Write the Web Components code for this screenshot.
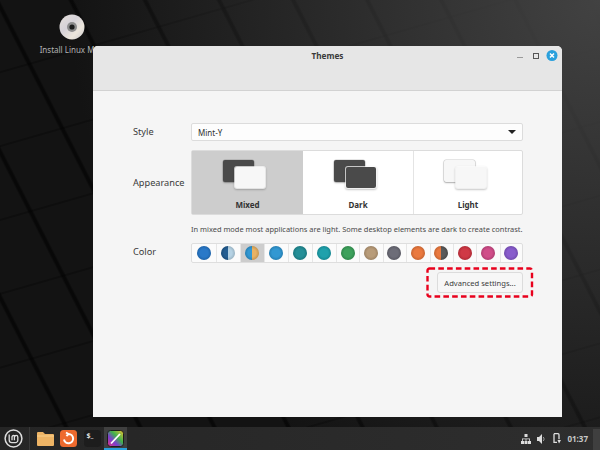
<!DOCTYPE html>
<html>
<head>
<meta charset="utf-8">
<title>Themes</title>
<style>
  html, body { margin: 0; height: 100%; }
  body { width: 600px; height: 450px; overflow: hidden; font-family: "Noto Sans", sans-serif; }
</style>
</head>
<body>
<mint-desktop>
  <desktop-icon label="Install Linux Mint"></desktop-icon>
  <themes-window title-text="Themes"></themes-window>
  <mint-panel slot="panel"></mint-panel>
</mint-desktop>

<script>
class MintDesktop extends HTMLElement {
  constructor() {
    super();
    this.attachShadow({ mode: "open" });
    this.shadowRoot.innerHTML = `
      <style>
        :host { display: flex; flex-direction: column; width: 600px; height: 450px; }
        .area {
          flex: 1; position: relative; overflow: hidden;
          background:
            radial-gradient(circle at 600px 0, rgba(66,66,66,1) 0, rgba(66,66,66,.85) 80px, rgba(66,66,66,0) 530px),
            repeating-linear-gradient(164deg, transparent 0 68px, rgba(0,0,0,.28) 69px 70px, transparent 71px),
            repeating-linear-gradient(63deg, #131313 0 56px, #080808 58px 60px, #131313 62px 66px);
        }
      </style>
      <div class="area"><slot></slot></div>
      <slot name="panel"></slot>
    `;
  }
}

class DesktopIcon extends HTMLElement {
  constructor() {
    super();
    this.attachShadow({ mode: "open" });
    this.shadowRoot.innerHTML = `
      <style>
        :host { position: absolute; left: 36px; top: 14px; width: 72px; display: flex; flex-direction: column; align-items: center; color: #b4b4b4; font-size: 8px; }
        svg { display: block; }
        span { margin-top: 4px; white-space: nowrap; }
      </style>
      <svg width="26" height="26" viewBox="0 0 26 26">
        <defs>
          <linearGradient id="cd" x1="0" y1="0" x2="1" y2="1">
            <stop offset="0" stop-color="#e6e0da"/><stop offset=".4" stop-color="#d6d2d8"/>
            <stop offset=".7" stop-color="#ece6dc"/><stop offset="1" stop-color="#c9c8cc"/>
          </linearGradient>
        </defs>
        <circle cx="13" cy="13" r="12.5" fill="url(#cd)"/>
        <circle cx="13" cy="13" r="5" fill="#8d8d8d"/>
        <circle cx="13" cy="13" r="2.6" fill="#1d1d1d"/>
      </svg>
      <span></span>
    `;
  }
  connectedCallback() {
    this.shadowRoot.querySelector("span").textContent = this.getAttribute("label");
  }
}

class ThemesWindow extends HTMLElement {
  constructor() {
    super();
    this.attachShadow({ mode: "open" });
    this.shadowRoot.innerHTML = `
      <style>
        :host {
          position: absolute; left: 93px; top: 46px; width: 469px; height: 371px;
          display: flex; flex-direction: column; background: #f5f5f5; color: #303030;
          border-radius: 5px 5px 0 0; overflow: hidden;
        }
        header {
          height: 45px; flex: none; box-sizing: border-box; background: #e6e6e6; border-bottom: 1px solid #d2d2d2;
          position: relative; display: flex; justify-content: center; padding-top: 4px;
          font-size: 8.2px; font-weight: 700; color: #3a3a3a;
        }
        .btns { position: absolute; right: 3px; top: 3px; display: flex; align-items: center; }
        .btns svg { display: block; }
        main { flex: 1; display: grid; grid-template-columns: 58px 332px; grid-auto-rows: min-content; padding: 32px 0 0 40px; font-size: 9.2px; align-items: center; }
        .lbl { color: #3a3a3a; margin-bottom: 2px; }
        .combo {
          height: 18px; box-sizing: border-box; border: 1px solid #dcdcdc; border-radius: 2px; background: #fdfdfd;
          display: flex; align-items: center; justify-content: space-between; padding: 0 6px 0 6px; font-size: 8px;
        }
        .modes { display: flex; height: 65px; margin-top: 9px; border: 1px solid #dcdcdc; border-radius: 2px; box-sizing: border-box; background: #fff; }
        .hint { grid-column: 2; font-size: 7.45px; color: #4a4a4a; margin-top: 8px; height: 12px; line-height: 12px; white-space: nowrap; }
        .app { margin-top: 10px; }
        .swatches {
          display: grid; grid-template-columns: 25px repeat(5, 24px) repeat(8, 23.375px); height: 20px; margin-top: 8px;
          outline: 1px solid #dedede; outline-offset: -1px; border-radius: 2px; background: #fbfbfb;
        }
        .swatches color-swatch + color-swatch { box-shadow: inset 1px 0 0 #e6e6e6; }
        .row { grid-column: 2; display: flex; justify-content: flex-end; margin-top: 9px; position: relative; }
        .sw-lbl { margin-top: 7px; }
      </style>
      <header>
        <span id="t"></span>
        <div class="btns">
          <svg width="6" height="12" viewBox="0 0 6 12" style="margin-right:9px"><rect x="0" y="7" width="6" height="1" fill="#9a9a9a"/></svg>
          <svg width="8" height="8" viewBox="0 0 8 8" style="margin-right:6px"><rect x="1.5" y="1.5" width="5" height="5" fill="none" stroke="#555" stroke-width="1"/></svg>
          <svg width="13" height="13" viewBox="0 0 13 13"><circle cx="6" cy="6.5" r="5.5" fill="#2aa0dc"/><path d="M4 4.5l4 4M8 4.5l-4 4" stroke="#fff" stroke-width="1.5"/></svg>
        </div>
      </header>
      <main>
        <span class="lbl">Style</span>
        <div class="combo">Mint-Y
          <svg width="8" height="4" viewBox="0 0 8 4"><path d="M0 0h8L4 4z" fill="#222"/></svg>
        </div>
        <span class="lbl app">Appearance</span>
        <div class="modes">
          <mode-card label="Mixed" back="#4a4a4a" front="#f7f7f7" selected style="width:111px"></mode-card>
          <mode-card label="Dark" back="#4a4a4a" front="#4a4a4a" style="width:110px"></mode-card>
          <mode-card label="Light" back="#f7f7f7" front="#f7f7f7" style="width:109px;border-left:1px solid #e4e4e4"></mode-card>
        </div>
        <span class="hint">In mixed mode most applications are light. Some desktop elements are dark to create contrast.</span>
        <span class="lbl sw-lbl">Color</span>
        <div class="swatches" id="sw"></div>
        <div class="row"><red-outline><push-button>Advanced settings...</push-button></red-outline></div>
      </main>
    `;
    const colors = [
      ["#1a6fc4"], ["#14528a", "#b0cfe2"], ["#2390cf", "#e6ac58", 1], ["#2390cf"], ["#14868f"],
      ["#0f9aa6"], ["#2f9a50"], ["#b3946f"], ["#62626e"], ["#e86f30"], ["#e86f30", "#4e4e4e"],
      ["#cc2a38"], ["#cc4080"], ["#7f50c8"]
    ];
    const sw = this.shadowRoot.getElementById("sw");
    colors.forEach(([a, b, on]) => {
      const el = document.createElement("color-swatch");
      el.setAttribute("a", a);
      if (b) el.setAttribute("b", b);
      if (on) el.setAttribute("selected", "");
      sw.appendChild(el);
    });
  }
  connectedCallback() {
    this.shadowRoot.getElementById("t").textContent = this.getAttribute("title-text");
  }
}

class ModeCard extends HTMLElement {
  constructor() {
    super();
    this.attachShadow({ mode: "open" });
  }
  connectedCallback() {
    const back = this.getAttribute("back");
    const front = this.getAttribute("front");
    this.shadowRoot.innerHTML = `
      <style>
        :host { display: flex; flex-direction: column; align-items: center; box-sizing: border-box; font-size: 8px; font-weight: 700; color: #333; }
        :host([selected]) { background: #cdcdcd; }
        .pic { position: relative; width: 43px; height: 29px; margin: 9px 6px 0 0; }
        .pic i { position: absolute; border-radius: 2px; }
        .b { left: 0; top: 0; width: 31px; height: 22px; background: ${back}; box-shadow: 0 0 0 .5px rgba(0,0,0,.18), 0 1px 2px rgba(0,0,0,.25); }
        .f { left: 12px; top: 7px; width: 30px; height: 21px; background: ${front}; box-shadow: 0 0 0 1px rgba(255,255,255,.7), 0 1px 2px 1px rgba(0,0,0,.22); }
        span { margin-top: 10px; }
      </style>
      <div class="pic"><i class="b"></i><i class="f"></i></div>
      <span>${this.getAttribute("label")}</span>
    `;
  }
}

class ColorSwatch extends HTMLElement {
  constructor() {
    super();
    this.attachShadow({ mode: "open" });
  }
  connectedCallback() {
    const a = this.getAttribute("a");
    const b = this.getAttribute("b") || a;
    this.shadowRoot.innerHTML = `
      <style>
        :host { display: flex; align-items: center; justify-content: center; }
        :host([selected]) { background: #cdcdcd; }
        div {
          width: 14px; height: 14px; border-radius: 50%;
          background:
            radial-gradient(circle, rgba(255,255,255,.07) 0 40%, rgba(0,0,0,.28) 100%),
            linear-gradient(90deg, ${a} 50%, ${b} 50%);
        }
      </style>
      <div></div>
    `;
  }
}

class PushButton extends HTMLElement {
  constructor() {
    super();
    this.attachShadow({ mode: "open" });
    this.shadowRoot.innerHTML = `
      <style>
        :host {
          display: flex; align-items: center; justify-content: center; box-sizing: border-box;
          width: 86px; height: 21px; background: #f7f7f7; border: 1px solid #dcdcdc; border-radius: 3px;
          font-size: 7.6px; color: #3c3c3c; white-space: nowrap;
        }
      </style>
      <slot></slot>
    `;
  }
}

// the red dashed frame is an annotation drawn over the screenshot
class RedOutline extends HTMLElement {
  constructor() {
    super();
    this.attachShadow({ mode: "open" });
    this.shadowRoot.innerHTML = `
      <style>
        :host { display: block; position: relative; }
        svg { position: absolute; left: -11px; top: -5px; }
      </style>
      <slot></slot>
      <svg width="108" height="31" viewBox="0 0 108 31">
        <rect x="1.5" y="1.5" width="104.5" height="28" rx="2" fill="none" stroke="#e8001c" stroke-width="2.4" stroke-dasharray="5.6 3.2"/>
      </svg>
    `;
  }
}

class MintPanel extends HTMLElement {
  constructor() {
    super();
    this.attachShadow({ mode: "open" });
    this.shadowRoot.innerHTML = `
      <style>
        :host { display: flex; align-items: center; height: 23px; flex: none; background: linear-gradient(90deg, #252525, #2e2e2e); color: #c8c8c8; font-size: 8px; font-weight: 700; }
        .menu { width: 27px; display: flex; justify-content: center; margin-right: 2px; }
        .apps { display: flex; align-items: center; border-left: 1px solid #383838; padding-left: 4px; height: 100%; }
        .app { width: 23.3px; height: 23px; display: flex; align-items: center; justify-content: center; box-sizing: border-box; }
        .app.on { background: #404040; box-shadow: inset 0 -2px 0 #2aa0dc; }
        .tray { margin-left: auto; display: flex; align-items: center; height: 100%; }
        .tray svg { display: block; }
        .grip { width: 7px; height: 21px; background: #3f3f3f; margin: 2px 0 0 5px; }
      </style>
      <div class="menu">
        <svg width="19" height="19" viewBox="0 0 19 19" fill="none" stroke="#ddd">
          <circle cx="9.5" cy="9.5" r="8.4" stroke-width="1.5"/>
          <path d="M5.2 5.5v5.5a2.6 2.6 0 0 0 2.6 2.6h3.6a2.4 2.4 0 0 0 2.4-2.4V8a1.7 1.7 0 0 0-3.4 0v3.2M8 11.2V8a1.5 1.5 0 0 1 3 0" stroke-width="1.3"/>
        </svg>
      </div>
      <div class="apps">
        <div class="app">
          <svg width="17" height="16" viewBox="0 0 17 16"><path d="M0 2a1 1 0 0 1 1-1h5l2 2h8a1 1 0 0 1 1 1v10a1 1 0 0 1-1 1H1a1 1 0 0 1-1-1z" fill="#eeb465"/><rect y="4.5" width="17" height="1" fill="#f8cf8e"/></svg>
        </div>
        <div class="app">
          <svg width="17" height="17" viewBox="0 0 17 17"><rect width="17" height="17" rx="3.5" fill="#ee6a2e"/><path d="M8.5 4a4.6 4.6 0 1 1-4.5 5.5M8.5 4L6 2.5M8.5 4L6.4 6" fill="none" stroke="#fff" stroke-width="2"/></svg>
        </div>
        <div class="app">
          <svg width="17" height="17" viewBox="0 0 17 17"><rect width="17" height="17" rx="3.5" fill="#1d1d1d"/><text x="2.5" y="8" font-size="7" font-family="Noto Sans" fill="#ddd">$_</text></svg>
        </div>
        <div class="app on">
          <svg width="17" height="17" viewBox="0 0 17 17">
            <defs><linearGradient id="rb" x1="0" y1="1" x2="1" y2="0">
              <stop offset="0" stop-color="#e8327c"/><stop offset=".35" stop-color="#7a3fd0"/>
              <stop offset=".6" stop-color="#3fb24c"/><stop offset="1" stop-color="#f2c230"/>
            </linearGradient></defs>
            <rect x=".5" y=".5" width="16" height="16" rx="3" fill="url(#rb)" stroke="#1d1d1d"/>
            <path d="M4 13.5L13 4" stroke="#fff" stroke-width="1.8"/>
          </svg>
        </div>
      </div>
      <div class="tray">
        <svg width="10" height="10" viewBox="0 0 10 10" fill="#ddd" style="margin-right:6px"><rect x="3.5" y="0" width="3" height="3"/><rect x="0" y="7" width="3" height="3"/><rect x="3.5" y="7" width="3" height="3"/><rect x="7" y="7" width="3" height="3"/><path d="M1 7V4.5h8V7H8.2V5.3H5.4V7h-.8V5.3H1.8V7z"/></svg>
        <svg width="9" height="10" viewBox="0 0 9 10" style="margin-right:7px"><path d="M0 3h2l3-3v10L2 7H0z" fill="#ddd"/><path d="M6.3 3a3 3 0 0 1 0 4" fill="none" stroke="#999"/></svg>
        <svg width="8" height="11" viewBox="0 0 8 11" style="margin-right:6px"><path d="M1 .7h4a1 1 0 0 1 1 1v4.5M1 .7v8.6h3" fill="none" stroke="#ddd" stroke-width="1.3"/><path d="M4.5 7H8L6 10.6z" fill="#ddd"/></svg>
        <span>01:37</span>
        <div class="grip"></div>
      </div>
    `;
  }
}

customElements.define("mint-desktop", MintDesktop);
customElements.define("desktop-icon", DesktopIcon);
customElements.define("themes-window", ThemesWindow);
customElements.define("mode-card", ModeCard);
customElements.define("color-swatch", ColorSwatch);
customElements.define("push-button", PushButton);
customElements.define("red-outline", RedOutline);
customElements.define("mint-panel", MintPanel);
</script>
</body>
</html>
